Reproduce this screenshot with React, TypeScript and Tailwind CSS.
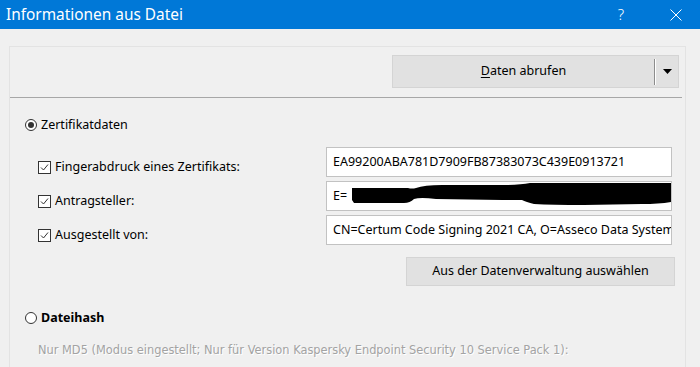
function Radio({ checked }: { checked?: boolean }) {
  return (
    <span className="flex h-[12px] w-[12px] shrink-0 items-center justify-center rounded-full border border-[#333] bg-white">
      {checked && <span className="h-[6px] w-[6px] rounded-full bg-[#333]" />}
    </span>
  );
}

function Check() {
  return (
    <span className="flex h-[13px] w-[13px] shrink-0 items-center justify-center border border-[#333] bg-white">
      <svg width="9" height="9" viewBox="0 0 9 9" fill="none">
        <path d="M1 4.5 L3.5 7 L8 1.5" stroke="#333" strokeWidth="1" />
      </svg>
    </span>
  );
}

const rows = [
  { label: "Fingerabdruck eines Zertifikats:", value: "EA99200ABA781D7909FB87383073C439E0913721" },
  { label: "Antragsteller:", value: "E=", redacted: true },
  { label: "Ausgestellt von:", value: "CN=Certum Code Signing 2021 CA, O=Asseco Data Systems" },
];

export default function App() {
  return (
    <div className="flex h-[367px] w-[700px] flex-col overflow-hidden bg-[#f0f0f0] font-['Noto_Sans',sans-serif] text-black">
      {/* Title bar */}
      <div className="flex h-[29px] shrink-0 items-center bg-[#0078d7] pl-[6px] text-white">
        <span className="text-[15.4px] leading-none">Informationen aus Datei</span>
        <span className="ml-auto mr-[46px] text-[15px] font-light leading-none">?</span>
        <svg className="mr-[18px]" width="12" height="12" viewBox="0 0 12 12">
          <path d="M0.5 0.5 L11.5 11.5 M11.5 0.5 L0.5 11.5" stroke="#fff" strokeWidth="1" />
        </svg>
      </div>

      {/* Body */}
      <div className="flex flex-1 flex-col pl-[9px] pr-[14px] pt-[17px]">
        <div className="flex flex-1 flex-col border border-b-0 border-[#e3e3e3]">
          {/* Top toolbar */}
          <div className="mr-[3px] flex h-[51px] items-start justify-end border-b border-[#a7a7a7] pr-[3px] pt-[8px]">
            <div className="flex h-[33px] w-[287px] items-center border border-[#d4d4d4] bg-[#e1e1e1] text-[12.5px]">
              <span className="flex-1 text-center">
                <span className="underline underline-offset-2">D</span>aten abrufen
              </span>
              <span className="h-[26px] w-[2px] border-l border-[#8c8c8c] bg-white" />
              <span className="flex w-[22px] justify-center">
                <svg width="9" height="5" viewBox="0 0 9 5">
                  <path d="M0 0 H9 L4.5 5 Z" fill="#000" />
                </svg>
              </span>
            </div>
          </div>

          {/* Zertifikatdaten */}
          <div className="mt-[17px] flex h-[20px] items-center gap-[4px] pl-[15px] text-[12.5px]">
            <Radio checked />
            <span>Zertifikatdaten</span>
          </div>

          <div className="mt-[12px] flex flex-col gap-[4px]">
            {rows.map((r) => (
              <div key={r.label} className="flex h-[30px]">
                <div className="mt-[10px] flex h-[20px] w-[316px] items-center gap-[4px] pl-[28px] text-[12.5px]">
                  <Check />
                  <span>{r.label}</span>
                </div>
                <div className="relative flex h-[30px] w-[346px] items-center overflow-hidden border border-[#c2c2c2] bg-white pl-[6px] text-[12.5px]">
                  <span className="whitespace-nowrap">{r.value}</span>
                  {r.redacted && (
                    <svg className="absolute left-[25px] top-[0px]" width="324" height="25" viewBox="0 0 324 25">
                      <path
                        d="M0 6 L56 6 Q60 7 64 6 Q72 3 90 3 L150 3 Q168 3 178 1 L324 1 L324 19 Q310 22 290 22 L232 23 Q200 23 182 22 Q174 20 170 18 L150 18 L84 17 Q68 15 62 17 Q58 21 52 21 L2 21 L0 18 Z"
                        fill="#000"
                      />
                    </svg>
                  )}
                </div>
              </div>
            ))}
          </div>

          <div className="ml-[396px] mt-[12px] flex h-[29px] w-[269px] items-center justify-center border border-[#d4d4d4] bg-[#e1e1e1] text-[12.5px]">
            Aus der Datenverwaltung auswählen
          </div>

          {/* Dateihash */}
          <div className="mt-[22px] flex h-[20px] items-center gap-[4px] pl-[15px] text-[12.5px] font-bold">
            <Radio />
            <span>Dateihash</span>
          </div>
          <div className="mt-[14px] pl-[28px] font-['DejaVu_Sans',sans-serif] text-[11.4px] leading-[16px] text-[#a3a3a3] [text-shadow:1px_1px_0_#fff]">
            Nur MD5 (Modus eingestellt; Nur für Version Kaspersky Endpoint Security 10 Service Pack 1):
          </div>
        </div>
      </div>
    </div>
  );
}
